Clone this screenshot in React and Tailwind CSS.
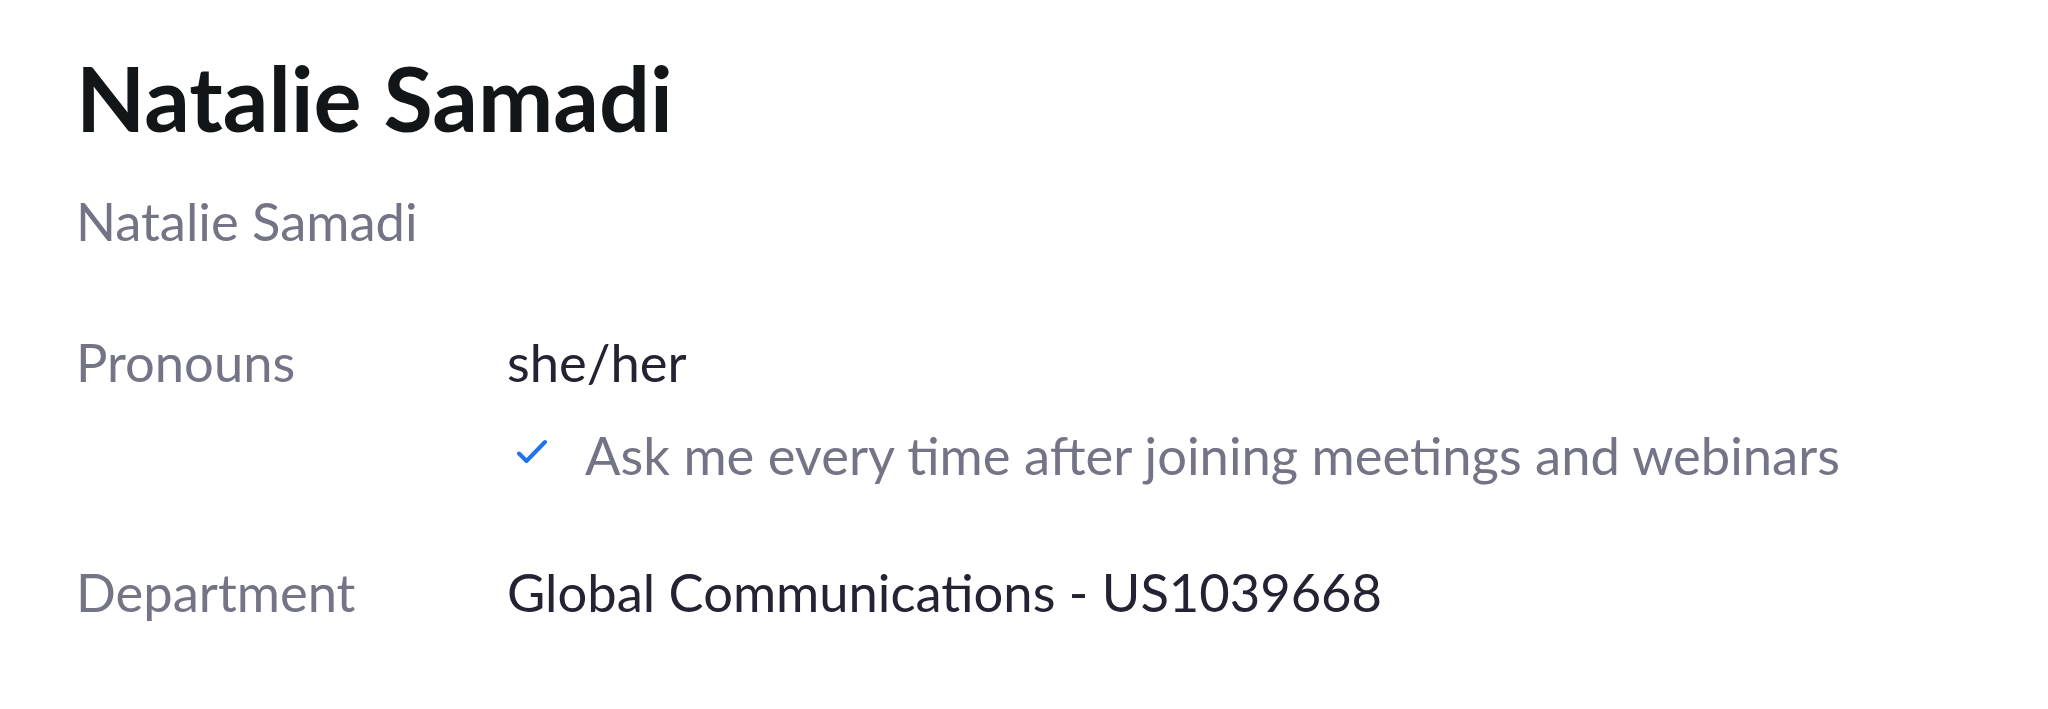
export default function App() {
    return (
        <main className="min-h-screen bg-white pl-[76px] pt-[43px] font-['Lato',sans-serif]">
            <h1 className="text-[90px] leading-[1.2] font-bold text-[#131619]">Natalie Samadi</h1>
            <p className="mt-[38px] text-[52.5px] leading-[1.2] text-[#747487]">Natalie Samadi</p>

            <div className="mt-[78px] grid grid-cols-[431px_1fr] text-[52.5px] leading-[1.2]">
                <div className="text-[#747487]">Pronouns</div>
                <div>
                    <div className="text-[#232333]">she/her</div>
                    <div className="mt-[30px] flex items-center text-[#747487]">
                        {/* check mark */}
                        <svg className="ml-[9px] mr-[38px] w-[31px] h-[28px] -mt-[5px]" viewBox="0 0 31 28" fill="none">
                            <path d="M3 15.5 L10.5 23 L29 4" stroke="#1F74EE" strokeWidth="4" strokeLinecap="round" strokeLinejoin="round" />
                        </svg>
                        <span>Ask me every time after joining meetings and webinars</span>
                    </div>
                </div>

                <div className="mt-[74px] text-[#747487]">Department</div>
                <div className="mt-[74px] text-[#232333]">Global Communications - US1039668</div>
            </div>
        </main>
    )
}
